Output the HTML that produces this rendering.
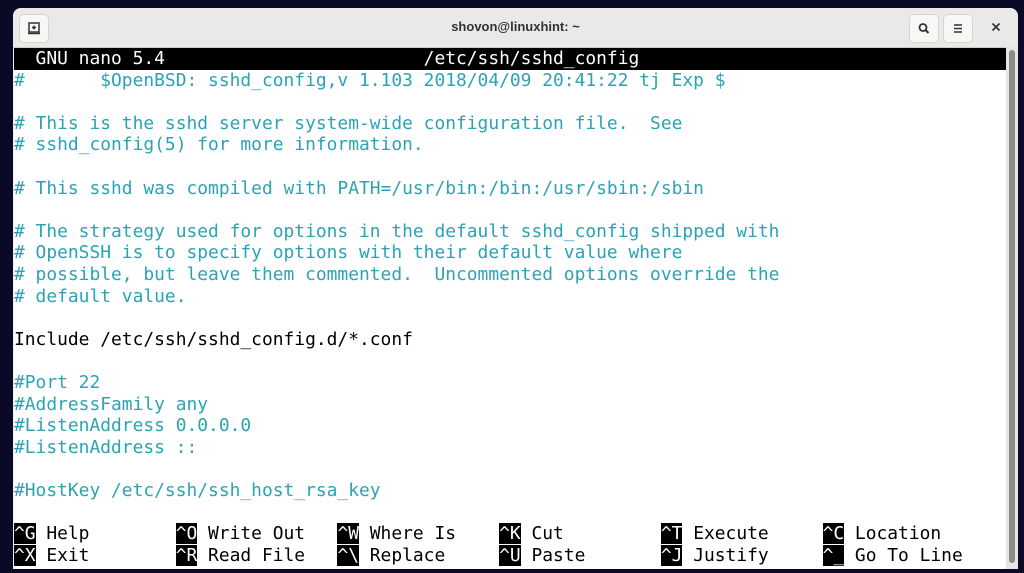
<!DOCTYPE html>
<html><head><style>
html,body{margin:0;padding:0;width:1024px;height:573px;background:#0b0a26;overflow:hidden}
.win{position:absolute;left:13px;top:8px;width:1005px;height:561px;background:#f0eeec;border-radius:8px 8px 0 0;overflow:hidden}
.tb{position:absolute;left:0;top:0;width:1005px;height:39px;background:#ebe9e7;border-bottom:1px solid #cfcbc7}
.title{position:absolute;left:0;right:0;top:11px;text-align:center;font:bold 13px "Liberation Sans",sans-serif;color:#2e3436}
.btn{position:absolute;top:6px;width:28px;height:27px;background:#f8f7f6;border:1px solid #d8d5d1;border-radius:5px}
.term{position:absolute;left:1px;top:40px;width:992px;height:521px;background:#fff;font:17.92px/21.6px "DejaVu Sans Mono",monospace;white-space:pre;color:#000;overflow:hidden}
.sb{position:absolute;left:993px;top:39px;width:12px;height:522px;background:#e8e6e4}
.thumb{position:absolute;left:3px;top:3px;width:6px;height:513px;background:#8a8a8a;border-radius:3px}
.bar{background:#000;color:#fff}
.c{color:#2ba3b4}
.k{background:#000;color:#fff}
.row{height:21.6px}
</style></head><body>
<div class="win">
 <div class="tb">
  <div class="btn" style="left:6px"><svg width="28" height="27" viewBox="0 0 28 27"><rect x="9" y="8" width="10" height="9" fill="none" stroke="#2e3436" stroke-width="1.5"/><path d="M8 18.5h12M14 10.5v4M12 12.5h4" stroke="#2e3436" stroke-width="1.5"/></svg></div>
  <div class="title">shovon@linuxhint: ~</div>
  <div class="btn" style="left:896px"><svg width="28" height="27" viewBox="0 0 28 27"><circle cx="13" cy="12.5" r="3.5" fill="none" stroke="#2e3436" stroke-width="1.8"/><path d="M15.5 15l3 3" stroke="#2e3436" stroke-width="2"/></svg></div>
  <div class="btn" style="left:930px"><svg width="28" height="27" viewBox="0 0 28 27"><path d="M10 10h8M10 13.5h8M10 17h8" stroke="#2e3436" stroke-width="1.6"/></svg></div>
  <svg style="position:absolute;left:976px;top:12px" width="14" height="14" viewBox="0 0 14 14"><path d="M3.5 3.5l7 7M10.5 3.5l-7 7" stroke="#2e3436" stroke-width="1.6"/></svg>
 </div>
 <div class="term"><div class="row bar">  GNU nano 5.4                        /etc/ssh/sshd_config                                 </div><div class="row c">#       $OpenBSD: sshd_config,v 1.103 2018/04/09 20:41:22 tj Exp $</div><div class="row"> </div><div class="row c"># This is the sshd server system-wide configuration file.  See</div><div class="row c"># sshd_config(5) for more information.</div><div class="row"> </div><div class="row c"># This sshd was compiled with PATH=/usr/bin:/bin:/usr/sbin:/sbin</div><div class="row"> </div><div class="row c"># The strategy used for options in the default sshd_config shipped with</div><div class="row c"># OpenSSH is to specify options with their default value where</div><div class="row c"># possible, but leave them commented.  Uncommented options override the</div><div class="row c"># default value.</div><div class="row"> </div><div class="row">Include /etc/ssh/sshd_config.d/*.conf</div><div class="row"> </div><div class="row c">#Port 22</div><div class="row c">#AddressFamily any</div><div class="row c">#ListenAddress 0.0.0.0</div><div class="row c">#ListenAddress ::</div><div class="row"> </div><div class="row c">#HostKey /etc/ssh/ssh_host_rsa_key</div><div class="row"> </div><div class="row"><span class="k">^G</span> Help        <span class="k">^O</span> Write Out   <span class="k">^W</span> Where Is    <span class="k">^K</span> Cut         <span class="k">^T</span> Execute     <span class="k">^C</span> Location</div><div class="row"><span class="k">^X</span> Exit        <span class="k">^R</span> Read File   <span class="k">^\</span> Replace     <span class="k">^U</span> Paste       <span class="k">^J</span> Justify     <span class="k">^_</span> Go To Line</div></div>
 <div class="sb"><div class="thumb"></div></div>
</div>
</body></html>
